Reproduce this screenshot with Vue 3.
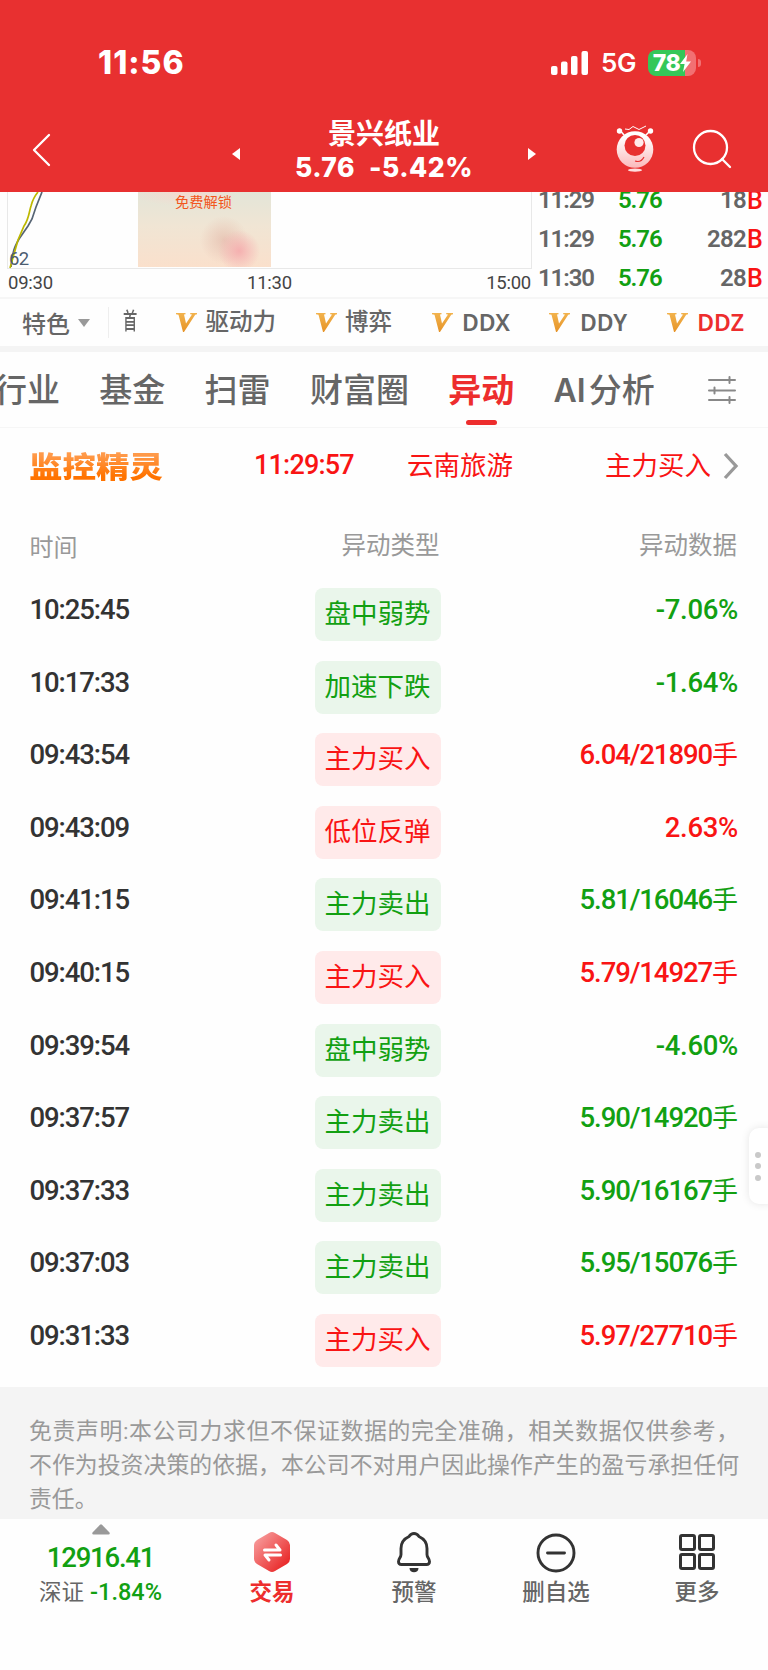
<template>
  <div class="page">
    <header class="header">
      <div class="status">
        <span class="clock">11:56</span>
        <svg class="signal" width="38" height="26" viewBox="0 0 38 26" fill="#fff">
          <rect x="0" y="16" width="6.5" height="9" rx="2" />
          <rect x="10" y="11.5" width="6.5" height="13.5" rx="2" />
          <rect x="20" y="6" width="6.5" height="19" rx="2" />
          <rect x="30.5" y="1" width="6.5" height="24" rx="2" />
        </svg>
        <span class="network">5G</span>
        <div class="battery">
          <span>78</span>
          <svg width="11" height="18" viewBox="0 0 11 18"><path d="M7.5 0 0 10h4.6L3 18l8-10.500H6.200z" fill="#fff" /></svg>
        </div>
        <i class="battery-cap"></i>
      </div>
      <div class="nav">
        <svg class="back" width="20" height="34" viewBox="0 0 20 34"><path d="M17 2 2 17l15 15" fill="none" stroke="#fff" stroke-width="2.3" stroke-linecap="round" stroke-linejoin="round" /></svg>
        <svg class="prev" width="8" height="12" viewBox="0 0 8 12"><path d="M8 0v12L0 6z" fill="#fff" /></svg>
        <div class="stock">
          <div class="stock-name">景兴纸业</div>
          <div class="stock-price"><span>5.76</span><span>-5.42%</span></div>
        </div>
        <svg class="next" width="8" height="12" viewBox="0 0 8 12"><path d="M0 0v12l8-6z" fill="#fff" /></svg>
        <svg class="mascot" width="40" height="50" viewBox="0 0 40 50">
          <defs>
            <linearGradient id="body" x1="0" y1="0" x2="0" y2="1">
              <stop offset="0.15" stop-color="#fff" />
              <stop offset="1" stop-color="#fbb9bb" />
            </linearGradient>
          </defs>
          <path d="M9 10 4 4M31 10l5-5" stroke="#fff" stroke-width="1.500" />
          <circle cx="4.500" cy="6" r="2.700" fill="#fff" />
          <circle cx="35.500" cy="6" r="2.700" fill="#fff" />
          <path d="m10 4 4 .5 4-3 6 3 7-3.500" fill="none" stroke="#fff" stroke-width="1" />
          <circle cx="20" cy="24.500" r="18.300" fill="url(#body)" />
          <circle cx="20" cy="20.500" r="10.500" fill="#e83030" />
          <circle cx="24" cy="17.500" r="4.600" fill="#ffe9e9" />
          <path d="M20 36q6 2 9-4" fill="none" stroke="#e83030" stroke-width="1.200" />
          <ellipse cx="20" cy="45.200" rx="7" ry="1.600" fill="#ffdede" />
        </svg>
        <svg class="search" width="40" height="40" viewBox="0 0 40 40" fill="none" stroke="#fff" stroke-width="2.300" stroke-linecap="round">
          <circle cx="18.500" cy="18.500" r="16.500" />
          <path d="m30 30 8 8" />
        </svg>
      </div>
    </header>

    <section class="market">
      <div class="chart">
        <div class="plot">
          <svg class="curve" width="34" height="77" viewBox="0 0 34 77" fill="none" stroke-width="1.700">
            <path d="M2 75C4 58 5 56 10 47L19 34 23 27 27 15 33 0" stroke="#576574" />
            <path d="M1 76 5 62 9 48 15 34C20 27 20 20 22 14Q24 6 29 0" stroke="#bdb800" />
          </svg>
          <span class="low">62</span>
          <div class="unlock">免费解锁</div>
        </div>
        <div class="axis"><span>09:30</span><span>11:30</span><span>15:00</span></div>
      </div>
      <div class="ticks">
        <div v-for="(t, i) in ticks" :key="i" class="tick">
          <span class="tick-time">{{ t.time }}</span>
          <span class="tick-price">{{ t.price }}</span>
          <span class="tick-vol">{{ t.vol }}</span>
          <span class="tick-side">B</span>
        </div>
      </div>
    </section>

    <section class="features">
      <span class="special">特色</span>
      <i class="caret"></i>
      <div class="cut"><span>首</span></div>
      <div v-for="f in features" :key="f.name" class="feature" :class="{ active: f.active, latin: f.latin }">
        <svg width="21" height="19" viewBox="0 0 21 19">
          <defs>
            <linearGradient id="gold" x1="0" y1="0" x2="0" y2="1">
              <stop offset="0" stop-color="#f2b34d" />
              <stop offset="1" stop-color="#e69327" />
            </linearGradient>
          </defs>
          <path d="M0 0h9.500v1.300L8 1.600l2 9 6-9-1.800-.4V0H21v1.200l-1.800.6L8 19H7L2.500 1.800 0 1.200z" fill="url(#gold)" />
        </svg>
        <span>{{ f.name }}</span>
      </div>
    </section>

    <nav class="tabs">
      <span v-for="tab in tabs" :key="tab" class="tab" :class="{ active: tab === '异动' }">{{ tab }}</span>
      <span class="tab ai"><b>AI</b>分析</span>
      <svg class="filter" width="30" height="28" viewBox="0 0 30 28" fill="none" stroke="#888" stroke-width="2" stroke-linecap="round">
        <path d="M2 4h26M2 14.500h26M2 24h26M22.500 1v6M7.500 11.500v6M22.500 21v6" />
      </svg>
    </nav>

    <section class="monitor">
      <span class="logo">监控精灵</span>
      <span class="m-time">11:29:57</span>
      <span class="m-name">云南旅游</span>
      <span class="m-type">主力买入</span>
      <svg width="16" height="28" viewBox="0 0 16 28"><path d="m2 2 11 12L2 26" fill="none" stroke="#999" stroke-width="3.300" /></svg>
    </section>

    <div class="row thead">
      <span>时间</span><span>异动类型</span><span>异动数据</span>
    </div>
    <section class="list">
      <div v-for="r in rows" :key="r.time" class="row" :class="r.dir">
        <span class="time">{{ r.time }}</span>
        <span class="tag">{{ r.type }}</span>
        <span class="data" :class="{ hand: r.hand }">{{ r.value }}<em v-if="r.hand">手</em></span>
      </div>
    </section>

    <section class="disclaimer">
      <p>免责声明:本公司力求但不保证数据的完全准确，相关数据仅供参考，</p>
      <p>不作为投资决策的依据，本公司不对用户因此操作产生的盈亏承担任何</p>
      <p>责任。</p>
    </section>

    <footer class="footer">
      <div class="index">
        <svg width="18" height="11" viewBox="0 0 18 11"><path d="M8 .8q1-1 2 0l7.500 7.700q.8 2-1 2h-15q-1.800 0-1-2z" fill="#999" /></svg>
        <div class="index-value">12916.41</div>
        <div class="index-sub"><span>深证</span><b>-1.84%</b></div>
      </div>
      <div class="action trade">
        <svg width="38" height="42" viewBox="0 0 38 42">
          <defs>
            <linearGradient id="hex" x1="0" y1="0" x2="1" y2="1">
              <stop offset="0.1" stop-color="#f79a9a" />
              <stop offset="0.85" stop-color="#e92b2b" />
            </linearGradient>
          </defs>
          <path d="M16 2q3-2 6 0l12 7q3 2 3 5v14q0 3-3 5l-12 7q-3 2-6 0L4 33q-3-2-3-5V14q0-3 3-5z" fill="url(#hex)" />
          <path d="M11.500 19H27l-4-5M27.500 24H12l4 5" fill="none" stroke="#fff" stroke-width="3" stroke-linejoin="round" stroke-linecap="round" />
        </svg>
        <span>交易</span>
      </div>
      <div class="action">
        <svg width="38" height="42" viewBox="0 0 38 42">
          <path d="M19 2.500c3 0 4 1.500 5 3 5.500 2.500 8 7 8 12v6c0 3 2.500 4 2.500 7 0 2-1 3-3 3h-25c-2 0-3-1-3-3 0-3 2.500-4 2.500-7v-6c0-5 2.500-9.500 8-12 1-1.500 2-3 5-3z" fill="none" stroke="#333" stroke-width="2.900" />
          <path d="M14.500 37h9c0 3-2 4.300-4.500 4.300S14.500 40 14.500 37z" fill="#333" />
        </svg>
        <span>预警</span>
      </div>
      <div class="action">
        <svg width="40" height="42" viewBox="0 0 40 42" fill="none" stroke="#333" stroke-width="2.900" stroke-linecap="round">
          <circle cx="20" cy="22" r="18" />
          <path d="M11.500 22h17" />
        </svg>
        <span>删自选</span>
      </div>
      <div class="action more">
        <svg width="38" height="42" viewBox="0 0 38 42" fill="none" stroke="#333" stroke-width="3">
          <rect x="2.500" y="4.500" width="14" height="14" rx="1.500" />
          <rect x="21.500" y="4.500" width="14" height="14" rx="1.500" />
          <rect x="2.500" y="23.500" width="14" height="14" rx="1.500" />
          <rect x="21.500" y="23.500" width="14" height="14" rx="1.500" />
        </svg>
        <span>更多</span>
      </div>
    </footer>

    <div class="handle"><i></i><i></i><i></i></div>
  </div>
</template>

<script setup>
const ticks = [
  { time: '11:29', price: '5.76', vol: 18 },
  { time: '11:29', price: '5.76', vol: 282 },
  { time: '11:30', price: '5.76', vol: 28 }
]

const features = [
  { name: '驱动力' },
  { name: '博弈' },
  { name: 'DDX', latin: true },
  { name: 'DDY', latin: true },
  { name: 'DDZ', latin: true, active: true }
]

const tabs = ['行业', '基金', '扫雷', '财富圈', '异动']

const rows = [
  { time: '10:25:45', type: '盘中弱势', value: '-7.06%', dir: 'down' },
  { time: '10:17:33', type: '加速下跌', value: '-1.64%', dir: 'down' },
  { time: '09:43:54', type: '主力买入', value: '6.04/21890', hand: true, dir: 'up' },
  { time: '09:43:09', type: '低位反弹', value: '2.63%', dir: 'up' },
  { time: '09:41:15', type: '主力卖出', value: '5.81/16046', hand: true, dir: 'down' },
  { time: '09:40:15', type: '主力买入', value: '5.79/14927', hand: true, dir: 'up' },
  { time: '09:39:54', type: '盘中弱势', value: '-4.60%', dir: 'down' },
  { time: '09:37:57', type: '主力卖出', value: '5.90/14920', hand: true, dir: 'down' },
  { time: '09:37:33', type: '主力卖出', value: '5.90/16167', hand: true, dir: 'down' },
  { time: '09:37:03', type: '主力卖出', value: '5.95/15076', hand: true, dir: 'down' },
  { time: '09:31:33', type: '主力买入', value: '5.97/27710', hand: true, dir: 'up' }
]
</script>

<style>
body {
  margin: 0;
  background: #fff;
}
</style>

<style scoped>
.page {
  position: relative;
  width: 768px;
  height: 1670px;
  overflow: hidden;
  background: #fefefe;
  color: #666;
  font-family: Roboto, "Noto Sans CJK SC", sans-serif;
}

.page * {
  box-sizing: border-box;
  white-space: nowrap;
}

svg {
  display: block;
  flex: none;
}

/* header */
.header {
  height: 191.5px;
  background: #e83030;
  color: #fff;
  font-family: Inter, "Noto Sans CJK SC", sans-serif;
}

.status {
  display: flex;
  align-items: center;
  height: 125px;
  padding-left: 98px;
}

.clock {
  width: 453px;
  font-size: 32px;
  font-weight: 800;
  letter-spacing: 1px;
}

.network {
  width: 47px;
  margin-left: 12px;
  font-size: 26px;
  font-weight: 600;
  letter-spacing: -0.3px;
}

.battery {
  display: flex;
  align-items: center;
  justify-content: center;
  width: 48px;
  height: 26px;
  border-radius: 8px;
  background: linear-gradient(90deg, #34c759 78%, #f27072 78%);
  font-size: 23px;
  font-weight: 800;
  letter-spacing: -0.5px;
}

.battery-cap {
  width: 3px;
  height: 8px;
  margin-left: 2px;
  border-radius: 0 4px 4px 0;
  background: #f27072;
}

.nav {
  display: flex;
  align-items: flex-start;
  height: 66px;
  margin-top: -10px;
}

.back {
  margin: 18px 0 0 32px;
}

.prev {
  margin: 33px 0 0 180px;
}

.next {
  margin-top: 33px;
}

.stock {
  width: 288px;
  padding-top: 1px;
  text-align: center;
}

.stock-name {
  height: 35px;
  font-size: 28px;
  line-height: 36px;
  font-weight: 700;
}

.stock-price {
  display: flex;
  justify-content: center;
  gap: 14px;
  font-size: 26.5px;
  line-height: 33px;
  font-weight: 800;
  letter-spacing: 0.5px;
}

.mascot {
  margin: 10px 0 0 79px;
}

.search {
  margin: 13.5px 0 0 37px;
}

/* chart and ticks */
.market {
  display: flex;
  height: 105.500px;
  overflow: hidden;
}

.chart {
  width: 532px;
  padding-left: 7px;
}

.plot {
  position: relative;
  height: 77px;
  border: solid #e8e8e8;
  border-width: 0 1.500px 1.500px;
}

.curve {
  position: absolute;
  left: 1px;
  top: 0;
}

.low {
  position: absolute;
  left: 1px;
  bottom: -2px;
  color: #4c5c70;
  font-size: 18.500px;
  line-height: 22px;
  letter-spacing: -0.6px;
}

.unlock {
  width: 133px;
  height: 75px;
  margin-left: 130px;
  padding-right: 2px;
  background:
    radial-gradient(circle at 101px 59px, #f5b0b0 0, rgba(245, 176, 176, 0) 21px),
    radial-gradient(circle at 86px 48px, rgba(225, 180, 165, 0.6) 0, rgba(225, 180, 165, 0) 24px),
    radial-gradient(ellipse 55px 14px at 46px 0, rgba(248, 215, 205, 0.9), rgba(248, 215, 205, 0)),
    linear-gradient(#e3e5d8, #f0e5d4 45%, #fae0cc);
  color: #f2561d;
  font-size: 14.200px;
  line-height: 21px;
  text-align: center;
}

.axis {
  display: flex;
  justify-content: space-between;
  padding: 3px 1px 0 1px;
  color: #444;
  font-size: 18.500px;
  line-height: 22px;
  letter-spacing: -0.25px;
}

.ticks {
  flex: 1;
  margin-top: -11px;
  padding-left: 6px;
  font-size: 24px;
  font-weight: 600;
}

.tick {
  display: flex;
  height: 39px;
  line-height: 39px;
  letter-spacing: -1.100px;
}

.tick-time {
  width: 80px;
}

.tick-price {
  width: 55px;
  color: #12a012;
}

.tick-vol {
  width: 73px;
  text-align: right;
  letter-spacing: -0.700px;
}

.tick-side {
  margin-left: 1px;
  color: #f91414;
  font-weight: 500;
  font-size: 25px;
}

/* feature bar */
.features {
  display: flex;
  align-items: center;
  height: 49px;
  border-top: 2px solid #f6f6f6;
  padding-left: 22px;
  font-size: 24px;
}

.special {
  width: 56px;
  font-weight: 500;
  font-size: 24px;
}

.caret {
  border: solid transparent;
  border-width: 8px 6.500px 0;
  border-top-color: #999;
}

.cut {
  height: 31px;
  width: 39px;
  margin-left: 17.500px;
  padding-left: 14px;
  border-left: 1.500px solid #eee;
  line-height: 29px;
  font-weight: 500;
}

.cut span {
  display: inline-block;
  font-size: 23px;
  transform: scaleX(0.62);
  transform-origin: left;
}

.feature {
  display: flex;
  align-items: center;
  gap: 8.500px;
  margin-left: 29.500px;
  font-size: 23.500px;
  font-weight: 500;
  line-height: 46px;
}

.feature + .feature {
  margin-left: 39.500px;
}

.feature span {
  margin-top: -1px;
}

.feature.latin {
  gap: 9.500px;
  font-family: "Noto Sans", sans-serif;
  font-size: 23px;
  font-weight: 600;
}

.feature.active {
  color: #ed2d2d;
}

/* tabs */
.tabs {
  display: flex;
  position: relative;
  height: 82px;
  border-top: 6px solid #f4f4f4;
  border-bottom: 1.500px solid #f6f6f6;
  font-size: 33px;
  font-weight: 500;
  line-height: 76px;
}

.tab {
  position: relative;
  margin-right: 39.300px;
  font-family: Inter, "Noto Sans CJK SC", sans-serif;
}

.tab:first-child {
  margin-left: -6px;
}

.tab.active {
  color: #ed2d2d;
  font-weight: 700;
}

.tab.active::after {
  content: "";
  position: absolute;
  left: 18px;
  bottom: 2px;
  width: 31px;
  height: 5.500px;
  border-radius: 3px;
  background: #ed2d2d;
}

.ai {
  margin-right: 0;
}

.ai b {
  margin-right: 3px;
  font-size: 32px;
  font-weight: 600;
}

.filter {
  margin: 24px 31px 0 auto;
}

/* monitor strip */
.monitor {
  display: flex;
  align-items: center;
  height: 75px;
  padding-left: 29px;
  color: #f91414;
  font-size: 26.500px;
}

.logo {
  width: 225px;
  background: linear-gradient(#ff9a4a 25%, #ff7300 75%);
  background-clip: text;
  -webkit-background-clip: text;
  color: transparent;
  font-size: 33.500px;
  font-weight: 900;
  transform: scaleY(0.87);
}

.m-time {
  width: 153px;
  margin-top: -2px;
  font-size: 27px;
  font-weight: 500;
  letter-spacing: -0.800px;
}

.m-name {
  width: 198px;
  margin-top: -4px;
}

.m-type {
  width: 118px;
  margin-top: -4px;
}

/* table */
.row {
  display: flex;
  height: 72.600px;
  padding: 0 30px 0 29.500px;
}

.thead {
  height: 85px;
  color: #999;
  font-size: 24.500px;
  line-height: 86px;
}

.thead span {
  width: 99px;
}

.thead span:first-child {
  width: 312px;
  font-size: 24px;
  line-height: 90px;
}

.thead span:last-child {
  margin-left: auto;
}

.time {
  width: 285px;
  color: #333;
  font-size: 27.500px;
  font-weight: 500;
  line-height: 44px;
  letter-spacing: -1.100px;
}

.tag {
  width: 126px;
  height: 53px;
  border-radius: 8px;
  font-size: 26.500px;
  line-height: 51px;
  text-align: center;
}

.data {
  flex: 1;
  font-size: 27.500px;
  font-weight: 500;
  line-height: 44px;
  text-align: right;
  letter-spacing: -0.300px;
}

.data.hand {
  letter-spacing: -1.100px;
}

.data em {
  font-size: 26px;
  font-style: normal;
  font-weight: 400;
  letter-spacing: 0;
}

.down .tag,
.down .data {
  color: #12a012;
}

.up .tag,
.up .data {
  color: #f91414;
}

.down .tag {
  background: #eaf6eb;
}

.up .tag {
  background: #ffeaea;
}

/* disclaimer */
.disclaimer {
  height: 132px;
  padding: 28px 29px 0;
  background: #f4f4f4;
  color: #999;
  font-size: 22.850px;
  line-height: 34.400px;
}

.disclaimer p {
  margin: 0;
}

.disclaimer p:not(:last-child) {
  text-align-last: justify;
}

/* bottom bar */
.footer {
  display: grid;
  grid-template-columns: 201px repeat(4, 142px);
  height: 151px;
  background: #fefefe;
}

.index {
  display: flex;
  flex-direction: column;
  align-items: center;
  padding-top: 5px;
  color: #12a012;
}

.index-value {
  margin-top: 6px;
  font-size: 27.500px;
  font-weight: 500;
  line-height: 34px;
  letter-spacing: -1.200px;
}

.index-sub {
  display: flex;
  gap: 6px;
  font-size: 23.500px;
  line-height: 34px;
}

.index-sub span {
  color: #666;
  font-size: 22.500px;
}

.index-sub b {
  font-weight: 500;
}

.action {
  display: flex;
  flex-direction: column;
  align-items: center;
  padding-top: 12px;
  font-size: 22.500px;
  font-weight: 500;
  line-height: 38px;
}

.trade {
  color: #ed2d2d;
  font-weight: 700;
}

.more {
  padding-right: 2px;
}

.handle {
  position: absolute;
  top: 1128px;
  right: -8px;
  display: flex;
  flex-direction: column;
  justify-content: center;
  gap: 5.500px;
  width: 27px;
  height: 76px;
  padding-left: 6px;
  border-radius: 10px;
  background: #fff;
  box-shadow: 0 0 9px rgba(0, 0, 0, 0.1);
}

.handle i {
  width: 6px;
  height: 6px;
  border-radius: 50%;
  background: #c9c9c9;
}
</style>
